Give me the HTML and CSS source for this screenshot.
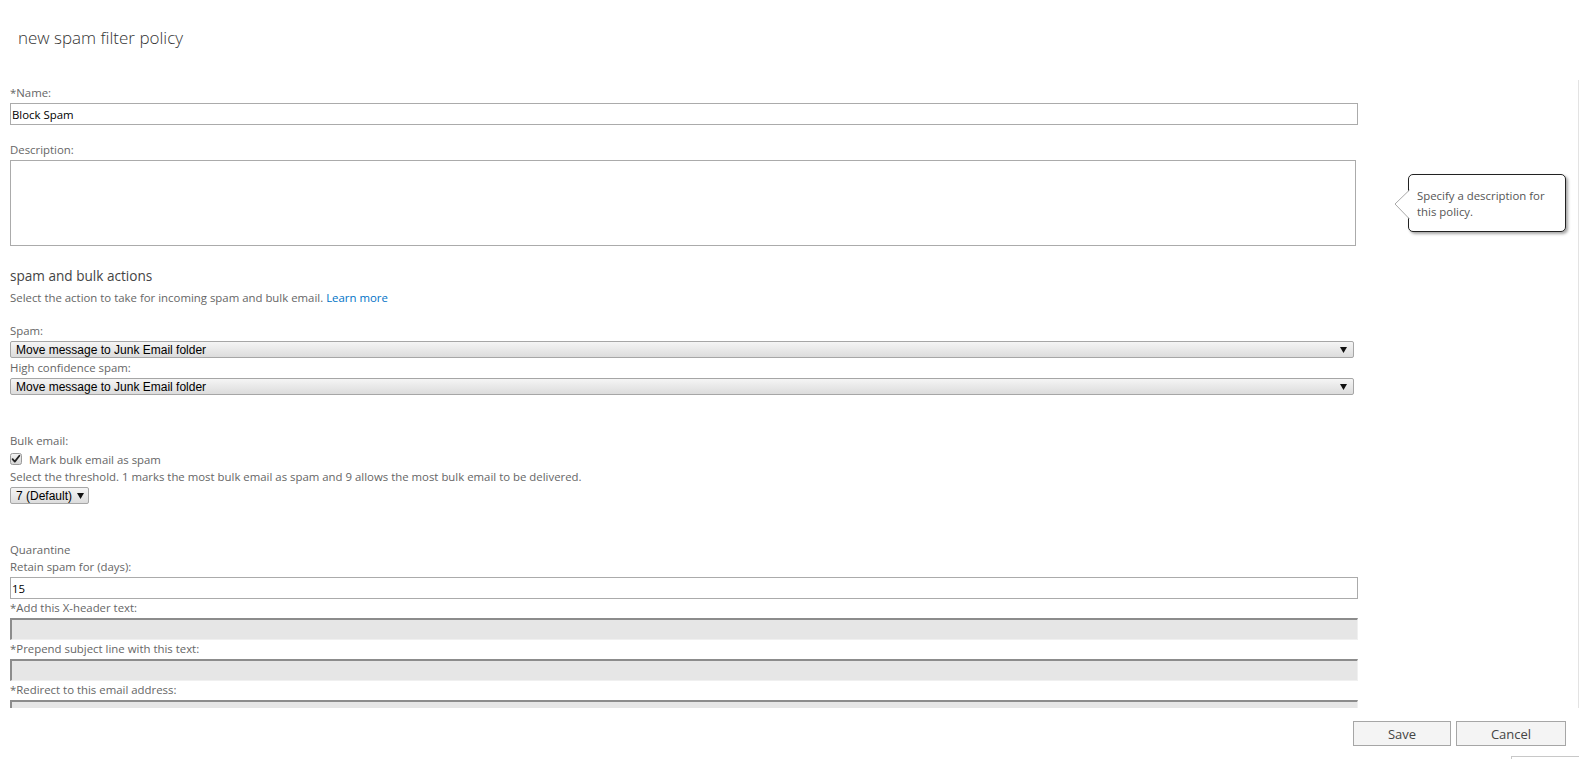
FILE: index.html
```html
<!DOCTYPE html>
<html>
<head>
<meta charset="utf-8">
<title>new spam filter policy</title>
<link rel="stylesheet" href="styles.css">
</head>
<body>
<div class="page">
  <header class="header">
    <h1 class="title">new spam filter policy</h1>
  </header>
  <main class="content">
    <div class="form">
      <div class="label">*Name:</div>
      <input class="text-input" type="text" value="Block Spam">

      <div class="label gap-desc">Description:</div>
      <textarea class="textarea"></textarea>

      <h2 class="section-title">spam and bulk actions</h2>
      <div class="hint">Select the action to take for incoming spam and bulk email. <a class="link" href="#">Learn more</a></div>

      <div class="label gap-spam">Spam:</div>
      <div class="select wide">
        <span>Move message to Junk Email folder</span>
        <svg class="arrow" width="7" height="6" viewBox="0 0 7 6"><polygon points="0,0 7,0 3.5,6" fill="#111"/></svg>
      </div>
      <div class="label tight">High confidence spam:</div>
      <div class="select wide">
        <span>Move message to Junk Email folder</span>
        <svg class="arrow" width="7" height="6" viewBox="0 0 7 6"><polygon points="0,0 7,0 3.5,6" fill="#111"/></svg>
      </div>

      <div class="label gap-bulk">Bulk email:</div>
      <div class="check-row">
        <svg class="checkbox" width="12" height="12" viewBox="0 0 12 12">
          <defs><linearGradient id="cb" x1="0" y1="0" x2="0" y2="1"><stop offset="0" stop-color="#f4f4f4"/><stop offset="1" stop-color="#d4d4d4"/></linearGradient></defs>
          <rect x="0.5" y="0.5" width="11" height="11" rx="2" fill="url(#cb)" stroke="#9a9a9a"/>
          <path d="M2.6 6.2 L4.8 8.6 L9.4 2.8" fill="none" stroke="#222" stroke-width="1.8" stroke-linecap="round" stroke-linejoin="round"/>
        </svg>
        <span class="check-label">Mark bulk email as spam</span>
      </div>
      <div class="label">Select the threshold. 1 marks the most bulk email as spam and 9 allows the most bulk email to be delivered.</div>
      <div class="select small">
        <span>7 (Default)</span>
        <svg class="arrow" width="7" height="6" viewBox="0 0 7 6"><polygon points="0,0 7,0 3.5,6" fill="#111"/></svg>
      </div>

      <div class="label gap-quar">Quarantine</div>
      <div class="label">Retain spam for (days):</div>
      <input class="text-input" type="text" value="15">
      <div class="label">*Add this X-header text:</div>
      <input class="text-input disabled" type="text" disabled>
      <div class="label">*Prepend subject line with this text:</div>
      <input class="text-input disabled" type="text" disabled>
      <div class="label">*Redirect to this email address:</div>
      <input class="text-input disabled" type="text" disabled>
    </div>
  </main>
  <footer class="footer">
    <div class="buttons">
      <button class="btn save">Save</button>
      <button class="btn cancel">Cancel</button>
    </div>
    <div class="peek"></div>
  </footer>

  <div class="tooltip">
    <svg class="tip-arrow" width="16" height="32" viewBox="0 0 16 32">
      <polygon points="15.5,1 1,15 15.5,30" fill="#fff"/>
      <polyline points="15.5,1 1,15 15.5,30" fill="none" stroke="#a8a8a8" stroke-width="1"/>
    </svg>
    Specify a description for this policy.
  </div>
</div>
</body>
</html>
```

FILE: styles.css
```css
html, body {
  margin: 0;
  padding: 0;
  background: #fff;
  overflow: hidden;
}

body {
  font-family: "Open Sans", "Noto Sans", sans-serif;
  font-size: 11.4px;
  color: #666;
}

.page {
  position: relative;
  width: 1579px;
  height: 759px;
  display: flex;
  flex-direction: column;
  overflow: hidden;
}

.header {
  height: 80px;
  flex: none;
  box-sizing: border-box;
  padding: 26px 0 0 18px;
}

.title {
  margin: 0;
  font-size: 17px;
  font-weight: 300;
  color: #333;
  line-height: 24px;
}

.content {
  height: 628px;
  flex: none;
  overflow: hidden;
  border-right: 1px solid #e3e3e3;
  box-sizing: border-box;
}

.form {
  display: flex;
  flex-direction: column;
  align-items: flex-start;
  padding: 4px 0 0 10px;
}

.label {
  line-height: 17px;
  color: #666;
}

.gap-desc { margin-top: 16px; }
.gap-spam { margin-top: 16px; }
.gap-bulk { margin-top: 37px; }
.gap-quar { margin-top: 37px; }
.tight { margin-top: 1px; }

.text-input {
  box-sizing: border-box;
  width: 1348px;
  height: 22px;
  margin: 2px 0 0 0;
  padding: 0 1px;
  border: 1px solid #ababab;
  font-family: "Open Sans", "Noto Sans", sans-serif;
  font-size: 11.4px;
  color: #000;
  background: #fff;
  outline: none;
}

.text-input.disabled {
  background: #e6e6e6;
  border-top: 2px solid #8c8c8c;
  border-left: 2px solid #8c8c8c;
  border-right: 1px solid #f0f0f0;
  border-bottom: 1px solid #f0f0f0;
}

.textarea {
  box-sizing: border-box;
  width: 1346px;
  height: 86px;
  margin: 2px 0 0 0;
  border: 1px solid #ababab;
  resize: none;
  outline: none;
  display: block;
}

.section-title {
  margin: 20px 0 0 0;
  font-size: 13.6px;
  font-weight: 400;
  color: #444;
  line-height: 20px;
}

.hint {
  margin-top: 3px;
  line-height: 17px;
  color: #666;
}

.link {
  color: #0072c6;
  text-decoration: none;
}

.select {
  box-sizing: border-box;
  height: 17px;
  margin-top: 2px;
  display: flex;
  align-items: center;
  border: 1px solid #a6a6a6;
  border-radius: 2px;
  background: linear-gradient(#f5f5f5, #dcdcdc);
  font-family: "Liberation Sans", Arial, sans-serif;
  font-size: 12px;
  color: #000;
}

.select.wide {
  width: 1344px;
  justify-content: space-between;
  padding: 0 6px 0 5px;
}

.select.small {
  width: 79px;
  padding: 0 0 0 5px;
  gap: 5px;
}

.arrow {
  display: block;
  flex: none;
}

.check-row {
  display: flex;
  align-items: center;
  height: 18px;
  margin-top: 1px;
}

.checkbox {
  display: block;
  flex: none;
}

.check-label {
  margin-left: 7px;
  color: #666;
  line-height: 17px;
}

.footer {
  flex: 1;
  display: flex;
  flex-direction: column;
  align-items: flex-end;
  padding: 13px 13px 0 0;
  box-sizing: border-box;
}

.buttons {
  display: flex;
  gap: 5px;
}

.btn {
  box-sizing: border-box;
  height: 25px;
  border: 1px solid #a6a6a6;
  background: #f4f4f4;
  font-family: "Open Sans", "Noto Sans", sans-serif;
  font-size: 13px;
  color: #444;
  padding: 0;
}

.btn.save { width: 98px; }
.btn.cancel { width: 110px; }

.peek {
  margin-top: 10px;
  margin-right: -13px;
  width: 67px;
  height: 10px;
  border-top: 1px solid #c8c8c8;
  border-left: 1px solid #c8c8c8;
}

.tooltip {
  position: absolute;
  left: 1408px;
  top: 174px;
  width: 158px;
  height: 58px;
  box-sizing: border-box;
  padding: 13px 10px 0 8px;
  border: 1px solid #222;
  border-radius: 5px;
  background: #fff;
  box-shadow: 2px 2px 3px rgba(0, 0, 0, 0.35);
  line-height: 16px;
  color: #555;
}

.tip-arrow {
  position: absolute;
  left: -15px;
  top: 14px;
  display: block;
}
```
